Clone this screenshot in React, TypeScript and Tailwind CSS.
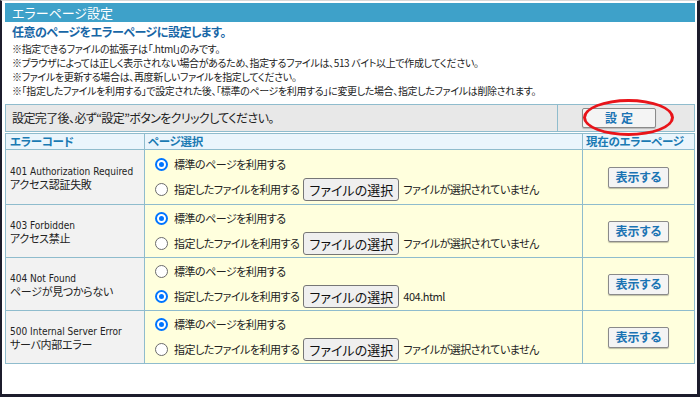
import React from "react";

const jp = { fontFamily: '"Noto Sans CJK JP", "Noto Sans", sans-serif' } as React.CSSProperties;

function Radio({ checked }: { checked: boolean }) {
  return checked ? (
    <span className="inline-flex items-center justify-center w-[13px] h-[13px] rounded-full bg-[#0075ff] shrink-0">
      <span className="w-[9px] h-[9px] rounded-full border-2 border-white bg-[#0075ff]" />
    </span>
  ) : (
    <span className="inline-block w-[13px] h-[13px] rounded-full border border-[#6b6b6b] bg-white shrink-0" />
  );
}

function Row({ code, name, std, file }: { code: string; name: string; std: boolean; file: string }) {
  return (
    <>
      <div className="bg-[#f2f2f2] border-l border-b border-[#8fbccd] flex flex-col justify-center pl-[4px] pt-[2px] text-[#222] whitespace-nowrap overflow-hidden">
        <div style={{ fontFamily: '"DejaVu Sans Condensed", "Liberation Sans", sans-serif' }} className="text-[10px] leading-[12px]">{code}</div>
        <div className="text-[11px] leading-[12px] tracking-[-0.3px]">{name}</div>
      </div>
      <div className="bg-[#ffffdd] border-l border-b border-[#8fbccd] flex flex-col justify-center pl-[10px] gap-[3px] text-[11px] tracking-[-0.5px] text-[#222] whitespace-nowrap">
        <div className="flex items-center h-[22px]">
          <Radio checked={std} />
          <span className="ml-[6px]">標準のページを利用する</span>
        </div>
        <div className="flex items-center h-[22px]">
          <Radio checked={!std} />
          <span className="ml-[6px]">指定したファイルを利用する</span>
          <span className="ml-[4px] h-[23px] w-[96px] flex items-center justify-center border border-[#767676] rounded-[3px] bg-[#efefef] text-[13px] tracking-normal text-[#111]">ファイルの選択</span>
          <span className="ml-[4px]">{file}</span>
        </div>
      </div>
      <div className="bg-[#ffffdd] border-l border-r border-b border-[#8fbccd] flex items-center justify-center">
        <span className="w-[61px] h-[21px] flex items-center justify-center border border-[#8a8a8a] rounded-[2px] bg-[#f4f4f4] shadow-[0_1px_1px_rgba(0,0,0,0.25)] text-[12px] font-bold text-[#1a73b3]">表示する</span>
      </div>
    </>
  );
}

export default function App() {
  return (
    <div style={jp} className="[font-feature-settings:'palt'] w-[700px] h-[397px] bg-white border-t border-t-[#d8d8d8] border-l-2 border-r-[3px] border-b-[3px] border-[#1c1c2c] pl-[3px] pr-[2px] overflow-hidden">
      <div className="mt-[2px] h-[19px] bg-[#3ea1c9] text-white text-[13px] leading-[19px] pl-[7px]">エラーページ設定</div>
      <div className="pl-[7px] mt-[1px] text-[12px] leading-[18px] tracking-[-0.5px] font-bold text-[#1766a6]">任意のページをエラーページに設定します。</div>
      <div className="pl-[7px] mt-[1px] text-[10px] leading-[14px] tracking-[-0.35px] text-[#222] whitespace-nowrap">
        <div>※指定できるファイルの拡張子は「.html」のみです。</div>
        <div>※ブラウザによっては正しく表示されない場合があるため、指定するファイルは、513 バイト以上で作成してください。</div>
        <div>※ファイルを更新する場合は、再度新しいファイルを指定してください。</div>
        <div>※「指定したファイルを利用する」で設定された後、「標準のページを利用する」に変更した場合、指定したファイルは削除されます。</div>
      </div>
      <div className="mt-[6px] h-[28px] flex border border-[#8fbccd] bg-[#e8e8e8] relative">
        <div className="flex-1 flex items-center pl-[6px] text-[12px] tracking-[-0.6px] text-[#222] whitespace-nowrap">設定完了後、必ず“設定”ボタンをクリックしてください。</div>
        <div className="w-[137px] border-l border-[#8fbccd] flex items-center pl-[24px]">
          <span className="w-[74px] h-[20px] flex items-center justify-center border border-[#8a8a8a] rounded-[2px] bg-[#f4f4f4] shadow-[0_1px_1px_rgba(0,0,0,0.2)] text-[12px] font-bold text-[#1a73b3] tracking-[4px] pl-[4px]">設定</span>
        </div>
        <div className="absolute left-[577px] top-[-6px] w-[91px] h-[37px] rounded-[50%] border-[3px] border-[#e8141a]" />
      </div>
      <div className="mt-[1px] grid grid-cols-[139px_438px_113px] grid-rows-[17px_55px_53px_53px_53px]">
        <div className="bg-[#eaf5fc] border-l border-t border-b border-[#8fbccd] text-[11.5px] leading-[15px] tracking-[-0.3px] font-bold text-[#1a7ab3] pl-[4px]">エラーコード</div>
        <div className="bg-[#eaf5fc] border-l border-t border-b border-[#8fbccd] text-[11.5px] leading-[15px] tracking-[-0.3px] font-bold text-[#1a7ab3] pl-[3px]">ページ選択</div>
        <div className="bg-[#eaf5fc] border-l border-r border-t border-b border-[#8fbccd] text-[11.5px] leading-[15px] tracking-[-0.3px] font-bold text-[#1a7ab3] pl-[3px]">現在のエラーページ</div>
        <Row code="401 Authorization Required" name="アクセス認証失敗" std={true} file="ファイルが選択されていません" />
        <Row code="403 Forbidden" name="アクセス禁止" std={true} file="ファイルが選択されていません" />
        <Row code="404 Not Found" name="ページが見つからない" std={false} file="404.html" />
        <Row code="500 Internal Server Error" name="サーバ内部エラー" std={true} file="ファイルが選択されていません" />
      </div>
    </div>
  );
}
